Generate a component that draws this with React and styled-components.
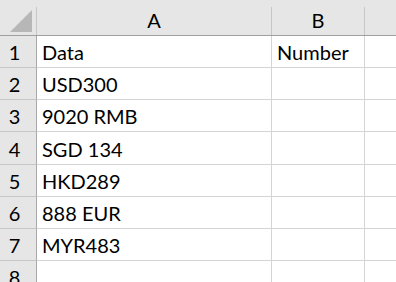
import React from "react";
import styled, { createGlobalStyle } from "styled-components";

const GlobalStyle = createGlobalStyle`
  html, body {
    margin: 0;
    padding: 0;
    background: #ffffff;
    overflow: hidden;
  }
  body {
    font-family: Lato, "Liberation Sans", sans-serif;
  }
`;

const columns = [
  { name: "A", width: 235 },
  { name: "B", width: 93 },
  { name: "C", width: 60 },
];

const rows = [
  ["Data", "Number"],
  ["USD300", ""],
  ["9020 RMB", ""],
  ["SGD 134", ""],
  ["HKD289", ""],
  ["888 EUR", ""],
  ["MYR483", ""],
  ["", ""],
];

const App = () => {
  return (
    <>
      <GlobalStyle />
      <Sheet>
        <HeaderRow>
          <Corner>
            <svg width="23" height="23" viewBox="0 0 23 23">
              <polygon points="22,0 22,22 0,22" fill="#b7b7b7" />
            </svg>
          </Corner>
          {columns.map((col) => (
            <ColHead key={col.name} $width={col.width}>
              {col.name === "C" ? "" : col.name}
            </ColHead>
          ))}
        </HeaderRow>
        {rows.map((row, i) => (
          <Row key={i}>
            <RowHead>{i + 1}</RowHead>
            {columns.map((col, j) => (
              <Cell key={col.name} $width={col.width}>
                {row[j] || ""}
              </Cell>
            ))}
          </Row>
        ))}
      </Sheet>
    </>
  );
};

const Sheet = styled.div`
  width: 396px;
  height: 282px;
  overflow: hidden;
  color: #000;
  font-size: 20px;
`;

const HeaderRow = styled.div`
  display: flex;
  height: 36px;
  box-sizing: border-box;
  padding-top: 7px;
  background-color: #e6e6e6;
  border-bottom: 1px solid #9f9f9f;
`;

const Corner = styled.div`
  flex: 0 0 37px;
  box-sizing: border-box;
  border-right: 1px solid #c6c6c6;
  display: flex;
  align-items: flex-end;
  justify-content: flex-end;
  padding: 0 3px 2px 0;
`;

const ColHead = styled.div`
  flex: 0 0 ${(p) => p.$width}px;
  box-sizing: border-box;
  border-right: 1px solid #c6c6c6;
  text-align: center;
  line-height: 26px;
`;

const Row = styled.div`
  display: flex;
  height: 32.15px;
`;

const RowHead = styled.div`
  flex: 0 0 37px;
  box-sizing: border-box;
  background-color: #e6e6e6;
  border-right: 1px solid #a8a8a8;
  border-bottom: 1px solid #c6c6c6;
  padding-right: 7px;
  text-align: center;
  display: flex;
  align-items: flex-end;
  justify-content: center;
  padding-bottom: 3px;
`;

const Cell = styled.div`
  flex: 0 0 ${(p) => p.$width}px;
  box-sizing: border-box;
  border-right: 1px solid #d4d4d4;
  border-bottom: 1px solid #d4d4d4;
  padding: 0 0 3px 5px;
  display: flex;
  align-items: flex-end;
  white-space: nowrap;
`;

export default App;
